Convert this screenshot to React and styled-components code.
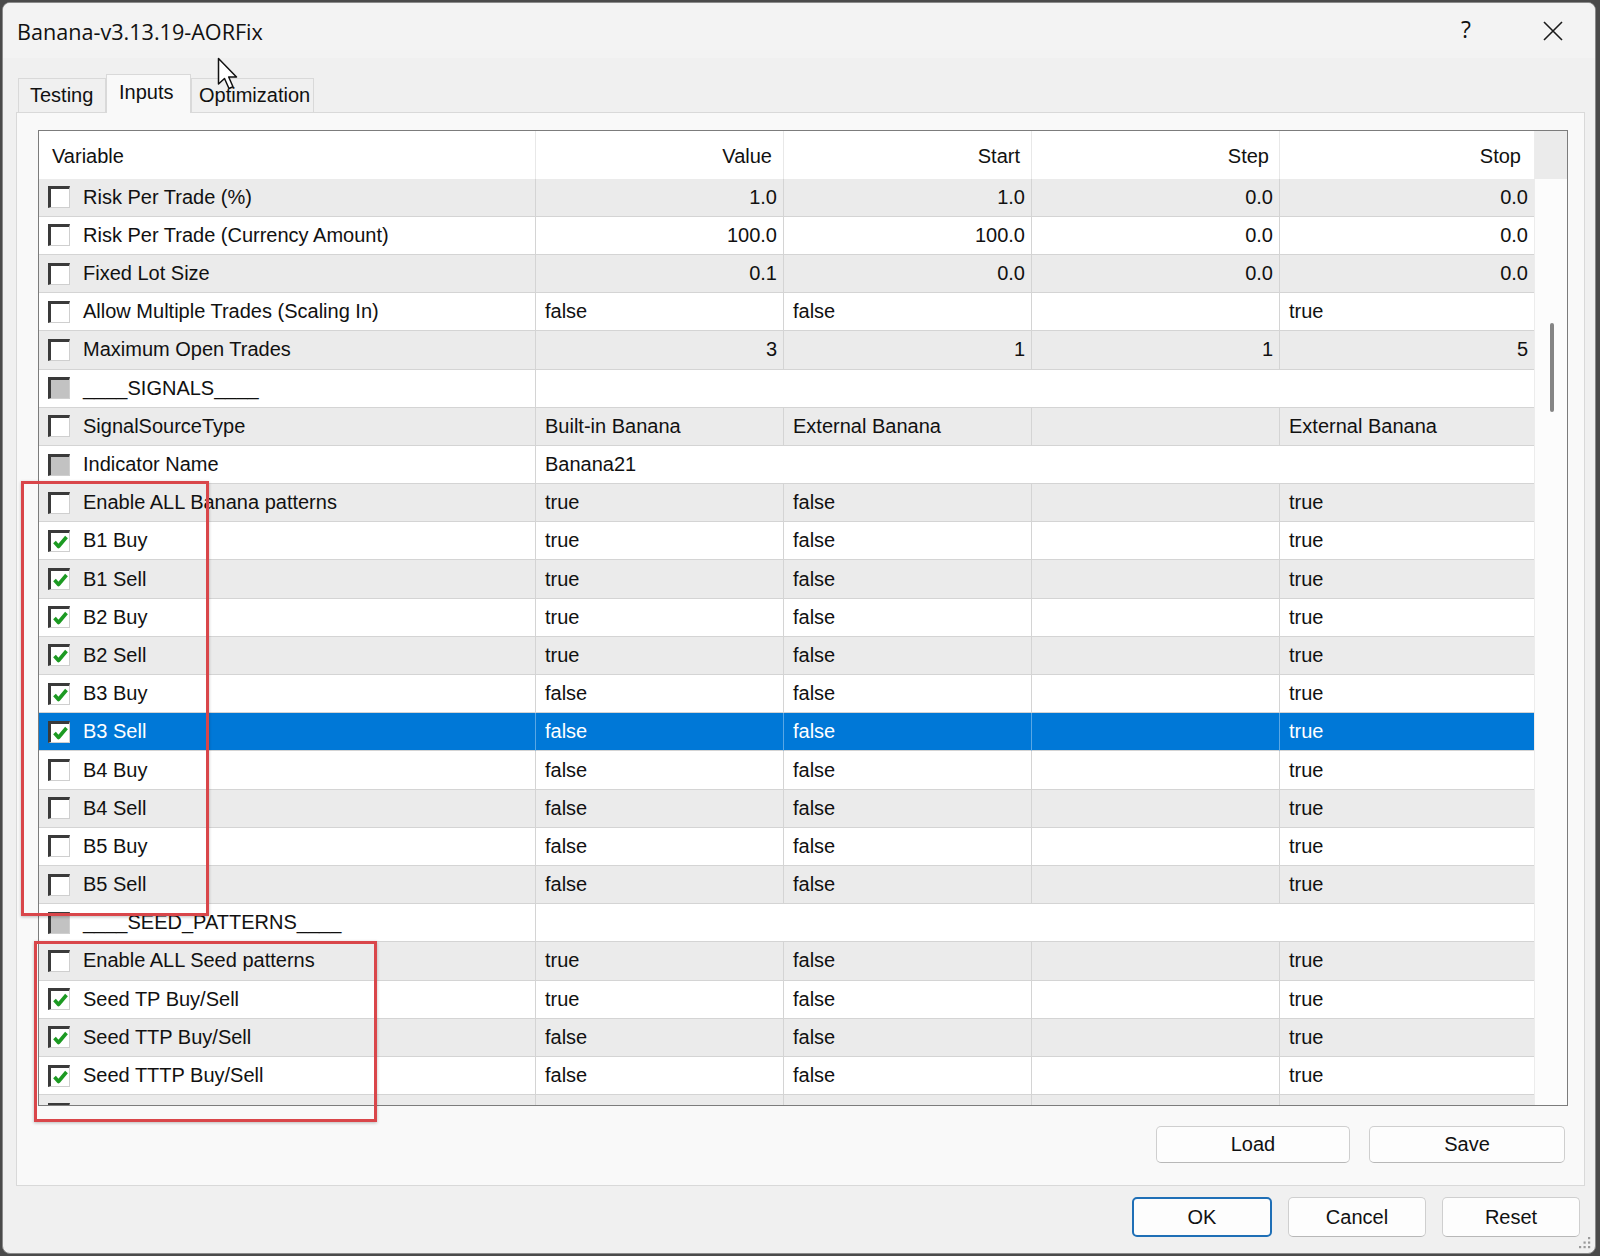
import React from "react";
import styled, { createGlobalStyle, css } from "styled-components";

const GlobalStyle = createGlobalStyle`
  html, body {
    margin: 0;
    padding: 0;
    background: #4a4a4a;
  }
  * { box-sizing: border-box; }
`;

const FONT = `"Liberation Sans", Arial, sans-serif`;

// Window shell
const Window = styled.div`
  position: relative;
  margin: 2px 0 0 2px;
  width: 1594px;
  height: 1252px;
  background: #f0f0f0;
  border: 1px solid #8a8a8a;
  border-radius: 8px;
  display: flex;
  flex-direction: column;
  overflow: hidden;
  font-family: ${FONT};
  color: #111;
`;

const TitleBar = styled.div`
  height: 55px;
  display: flex;
  align-items: center;
  padding-left: 14px;
  background: #f3f3f3;
`;

const Title = styled.div`
  flex: 1;
  font-family: "Open Sans", ${FONT};
  font-size: 21.6px;
  padding-top: 1px;
`;

const Help = styled.div`
  width: 40px;
  text-align: center;
  font-family: "Open Sans", ${FONT};
  font-size: 23px;
  margin-right: 47px;
  padding-bottom: 3px;
`;

const Close = styled.div`
  width: 40px;
  display: flex;
  justify-content: center;
  margin-right: 22px;
`;

// Tabs
const TabStrip = styled.div`
  height: 54px;
  display: flex;
  align-items: flex-end;
  padding-left: 15px;
`;

const Tab = styled.div`
  width: ${(p) => p.$w}px;
  height: ${(p) => (p.$active ? 39 : 34)}px;
  padding-left: ${(p) => p.$pad}px;
  display: flex;
  align-items: center;
  font-size: 20px;
  border: 1px solid #d9d9d9;
  border-bottom: none;
  background: ${(p) => (p.$active ? "#f9f9f9" : "#f0f0f0")};
  margin-bottom: ${(p) => (p.$active ? "-1px" : "0")};
  position: relative;
  z-index: ${(p) => (p.$active ? 1 : 0)};
  padding-bottom: ${(p) => (p.$active ? 4 : 1)}px;
`;

const Panel = styled.div`
  margin: 0 10px 0 13px;
  height: 1074px;
  border: 1px solid #d9d9d9;
  background: #f9f9f9;
  padding: 17px 16px 22px 21px;
  display: flex;
  flex-direction: column;
`;

// Grid
const GridBox = styled.div`
  height: 976px;
  border: 1px solid #7c7c7c;
  background: #fff;
  display: flex;
  overflow: hidden;
`;

const Table = styled.div`
  width: 1495px;
  display: flex;
  flex-direction: column;
  overflow: hidden;
`;

const cols = css`
  display: grid;
  grid-template-columns: 497px 248px 248px 248px 254px;
`;

const HeaderRow = styled.div`
  ${cols};
  flex: none;
  height: 47.6px;
  background: #fff;
`;

const HeaderCell = styled.div`
  display: flex;
  align-items: center;
  justify-content: ${(p) => (p.$left ? "flex-start" : "flex-end")};
  padding: ${(p) => (p.$left ? "4px 0 0 13px" : `4px ${p.$pr || 11}px 0 0`)};
  font-size: 20px;
  border-right: 1px solid #e8e8e8;
  &:last-child { border-right: none; }
`;

const Row = styled.div`
  ${cols};
  flex: none;
  height: 38.2px;
  background: ${(p) => (p.$selected ? "#0078d7" : p.$alt ? "#ebebeb" : "#fff")};
  color: ${(p) => (p.$selected ? "#fff" : "#111")};
`;

const Cell = styled.div`
  display: flex;
  align-items: center;
  justify-content: ${(p) => (p.$right ? "flex-end" : "flex-start")};
  padding: ${(p) => (p.$right ? "0 6px 0 0" : "0 0 0 9px")};
  font-size: 20px;
  white-space: nowrap;
  overflow: hidden;
  border-bottom: 1px solid #d4d4d4;
  border-right: 1px solid ${(p) => (p.$selected ? "rgba(255,255,255,0.35)" : "#d4d4d4")};
  grid-column: ${(p) => (p.$span ? "2 / -1" : "auto")};
  &:last-child { border-right: none; }
`;

const NameCell = styled(Cell)`
  padding-left: 9px;
  gap: 13px;
`;

const Box = styled.span`
  flex: none;
  width: 22px;
  height: 22px;
  border-top: 3px solid #3a3a3a;
  border-left: 3px solid #3a3a3a;
  border-right: 1px solid #cfcfcf;
  border-bottom: 1px solid #cfcfcf;
  background: ${(p) => (p.$disabled ? "#c2c2c2" : "#fff")};
  display: flex;
  align-items: center;
  justify-content: center;
`;

const ScrollTrack = styled.div`
  flex: 1;
  background: #fcfcfc;
  border-left: 1px solid #ececec;
  display: flex;
  flex-direction: column;
  align-items: center;
`;

const ScrollCorner = styled.div`
  align-self: stretch;
  height: 47.6px;
  background: #ebebeb;
`;

const Thumb = styled.div`
  width: 4px;
  height: 89px;
  margin-top: 144px;
  margin-left: 2px;
  border-radius: 2px;
  background: #858585;
`;

// Buttons
const ButtonRow = styled.div`
  display: flex;
  justify-content: flex-end;
  gap: ${(p) => p.$gap}px;
  margin-top: ${(p) => p.$top}px;
  padding-right: ${(p) => p.$right}px;
`;

const Button = styled.div`
  width: ${(p) => p.$w}px;
  height: ${(p) => p.$h}px;
  display: flex;
  align-items: center;
  justify-content: center;
  font-size: 20px;
  background: #fdfdfd;
  border: 1px solid #cfcfcf;
  border-bottom-color: #b8b8b8;
  border-radius: 5px;
  ${(p) =>
    p.$default &&
    css`
      border: 2px solid #1f6fb6;
    `}
`;

// Overlays
const RedFrame = styled.div`
  position: absolute;
  left: ${(p) => p.$x}px;
  top: ${(p) => p.$y}px;
  width: ${(p) => p.$w}px;
  height: ${(p) => p.$h}px;
  border: 3px solid #d9464a;
  box-shadow: 0 1px 3px rgba(0, 0, 0, 0.25);
  pointer-events: none;
`;

const Cursor = styled.svg`
  position: absolute;
  left: 214px;
  top: 54px;
`;

const Grip = styled.svg`
  position: absolute;
  right: 3px;
  bottom: 3px;
`;

const Check = () => (
  <svg width="15" height="14" viewBox="0 0 15 14">
    <path d="M1.5 7 L5.5 11.5 L13.5 2" fill="none" stroke="#1c9a22" strokeWidth="3.6" strokeLinejoin="round" />
  </svg>
);

const rows = [
  { label: "Risk Per Trade (%)", vals: ["1.0", "1.0", "0.0", "0.0"], num: true },
  { label: "Risk Per Trade (Currency Amount)", vals: ["100.0", "100.0", "0.0", "0.0"], num: true },
  { label: "Fixed Lot Size", vals: ["0.1", "0.0", "0.0", "0.0"], num: true },
  { label: "Allow Multiple Trades (Scaling In)", vals: ["false", "false", "", "true"] },
  { label: "Maximum Open Trades", vals: ["3", "1", "1", "5"], num: true },
  { label: "____SIGNALS____", box: "dis", span: "" },
  { label: "SignalSourceType", vals: ["Built-in Banana", "External Banana", "", "External Banana"] },
  { label: "Indicator Name", box: "dis", span: "Banana21" },
  { label: "Enable ALL Banana patterns", vals: ["true", "false", "", "true"] },
  { label: "B1 Buy", box: "on", vals: ["true", "false", "", "true"] },
  { label: "B1 Sell", box: "on", vals: ["true", "false", "", "true"] },
  { label: "B2 Buy", box: "on", vals: ["true", "false", "", "true"] },
  { label: "B2 Sell", box: "on", vals: ["true", "false", "", "true"] },
  { label: "B3 Buy", box: "on", vals: ["false", "false", "", "true"] },
  { label: "B3 Sell", box: "on", vals: ["false", "false", "", "true"], selected: true },
  { label: "B4 Buy", vals: ["false", "false", "", "true"] },
  { label: "B4 Sell", vals: ["false", "false", "", "true"] },
  { label: "B5 Buy", vals: ["false", "false", "", "true"] },
  { label: "B5 Sell", vals: ["false", "false", "", "true"] },
  { label: "____SEED_PATTERNS____", box: "dis", span: "" },
  { label: "Enable ALL Seed patterns", vals: ["true", "false", "", "true"] },
  { label: "Seed TP Buy/Sell", box: "on", vals: ["true", "false", "", "true"] },
  { label: "Seed TTP Buy/Sell", box: "on", vals: ["false", "false", "", "true"] },
  { label: "Seed TTTP Buy/Sell", box: "on", vals: ["false", "false", "", "true"] },
  { label: "", box: "dis", vals: ["", "", "", ""] },
];

const InputRow = ({ row, alt }) => {
  const sel = !!row.selected;
  return (
    <Row $alt={alt} $selected={sel}>
      <NameCell $selected={sel}>
        <Box $disabled={row.box === "dis"}>{row.box === "on" && <Check />}</Box>
        {row.label}
      </NameCell>
      {row.span !== undefined ? (
        <Cell $span $selected={sel}>{row.span}</Cell>
      ) : (
        row.vals.map((v, i) => (
          <Cell key={i} $right={row.num} $selected={sel}>
            {v}
          </Cell>
        ))
      )}
    </Row>
  );
};

const App = () => (
  <>
    <GlobalStyle />
    <Window>
      <TitleBar>
        <Title>Banana-v3.13.19-AORFix</Title>
        <Help>?</Help>
        <Close>
          <svg width="20" height="20" viewBox="0 0 20 20">
            <path d="M1 1 L19 19 M19 1 L1 19" stroke="#1a1a1a" strokeWidth="1.6" />
          </svg>
        </Close>
      </TitleBar>

      <TabStrip>
        <Tab $w={88} $pad={11}>Testing</Tab>
        <Tab $w={85} $pad={12} $active>Inputs</Tab>
        <Tab $w={123} $pad={7}>Optimization</Tab>
      </TabStrip>

      <Panel>
        <GridBox>
          <Table>
            <HeaderRow>
              <HeaderCell $left>Variable</HeaderCell>
              <HeaderCell>Value</HeaderCell>
              <HeaderCell>Start</HeaderCell>
              <HeaderCell $pr={10}>Step</HeaderCell>
              <HeaderCell $pr={13}>Stop</HeaderCell>
            </HeaderRow>
            {rows.map((r, i) => (
              <InputRow key={i} row={r} alt={i % 2 === 0} />
            ))}
          </Table>
          <ScrollTrack>
            <ScrollCorner />
            <Thumb />
          </ScrollTrack>
        </GridBox>

        <ButtonRow $gap={19} $top={20} $right={3}>
          <Button $w={194} $h={37}>Load</Button>
          <Button $w={196} $h={37}>Save</Button>
        </ButtonRow>
      </Panel>

      <ButtonRow $gap={16} $top={11} $right={15}>
        <Button $w={140} $h={40} $default>OK</Button>
        <Button $w={138} $h={40}>Cancel</Button>
        <Button $w={138} $h={40}>Reset</Button>
      </ButtonRow>

      <RedFrame $x={18} $y={478} $w={188} $h={435} />
      <RedFrame $x={31} $y={938} $w={343} $h={181} />

      <Cursor width="24" height="36" viewBox="0 0 24 36">
        <path
          d="M1.5 1.5 L1.5 27 L7.5 21.5 L12 31.5 L16 29.7 L11.7 20 L19.5 20 Z"
          fill="#fff"
          stroke="#111"
          strokeWidth="1.5"
          strokeLinejoin="round"
        />
      </Cursor>

      <Grip width="14" height="14" viewBox="0 0 14 14">
        {[
          [11, 2], [11, 6.5], [6.5, 6.5], [11, 11], [6.5, 11], [2, 11],
        ].map(([x, y], i) => (
          <rect key={i} x={x - 1} y={y - 1} width="2.2" height="2.2" fill="#9a9a9a" />
        ))}
      </Grip>
    </Window>
  </>
);

export default App;
